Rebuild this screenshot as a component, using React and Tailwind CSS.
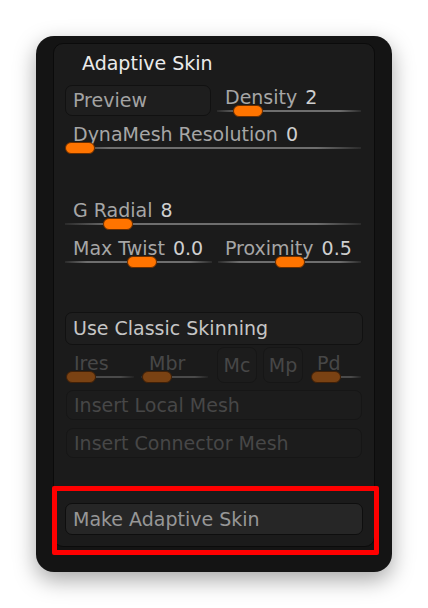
import React from "react";

function Slider({ label, value, knob, className = "", disabled = false, pl = "pl-[8px]" }) {
  return (
    <div className={`flex flex-col ${className}`}>
      <div
        className={`h-[16px] leading-[16px] whitespace-nowrap ${pl} ${
          disabled ? "text-[#474747]" : "text-[#a6a6a6]"
        }`}
      >
        {label}
        {value !== undefined && (
          <span className="text-[#cfcfcf] ml-[8px]">{value}</span>
        )}
      </div>
      <div className="relative h-[12px]">
        <div
          className={`absolute left-0 right-0 top-[5px] h-[2px] ${
            disabled
              ? "bg-[linear-gradient(to_right,#2a2a2a,#4a4a4a_30%,#4a4a4a_80%,#222222)]"
              : "bg-[linear-gradient(to_right,#2a2a2a,#6e6e6e_15%,#6e6e6e_85%,#2a2a2a)]"
          }`}
        />
        <div
          className={`absolute top-0 h-[12px] w-[30px] rounded-full border ${
            disabled
              ? "bg-[#7a4213] border-[#3f2008]"
              : "bg-[#ff7400] border-[#6a2e00]"
          }`}
          style={{ left: knob }}
        />
      </div>
    </div>
  );
}

function Button({ children, className = "", disabled = false, text = "text-[#a3a3a3]" }) {
  return (
    <div
      className={`flex items-center rounded-[7px] border pl-[7px] whitespace-nowrap ${
        disabled ? "border-[#161616] bg-[#1c1c1c] text-[#474747]" : `border-[#111111] bg-[#1e1e1e] ${text}`
      } ${className}`}
    >
      {children}
    </div>
  );
}

export default function App() {
  return (
    <div
      className="relative w-[428px] h-[608px] bg-white pt-[36px] pl-[36px]"
      style={{ fontFamily: '"DejaVu Sans", sans-serif' }}
    >
      <div className="w-[356px] h-[536px] rounded-[18px] bg-[#141414] pt-[7px] pl-[17px] shadow-[0_8px_22px_rgba(0,0,0,0.35)]">
        <div className="w-[322px] rounded-[10px] border border-[#0b0b0b] bg-[#1b1b1b] px-[11px] pb-[11px] text-[19px]">
          {/* Title */}
          <div className="h-[38px] flex items-center pl-[17px] text-[#ebebeb]">
            Adaptive Skin
          </div>

          {/* Row 1 */}
          <div className="mt-[3px] h-[32px] flex">
            <Button className="w-[146px] h-[31px]">Preview</Button>
            <Slider className="ml-[6px] mt-[4px] w-[144px]" label="Density" value="2" knob={16} />
          </div>

          {/* DynaMesh */}
          <Slider className="mt-[9px] w-[296px]" label="DynaMesh Resolution" value="0" knob={0} />

          {/* G Radial */}
          <Slider className="mt-[48px] w-[296px]" label="G Radial" value="8" knob={38} />

          {/* Max Twist / Proximity */}
          <div className="mt-[10px] flex">
            <Slider className="w-[147px]" label="Max Twist" value="0.0" knob={62} />
            <Slider className="ml-[6px] w-[143px]" label="Proximity" value="0.5" knob={57} pl="pl-[7px]" />
          </div>

          {/* Use Classic Skinning */}
          <Button className="mt-[44px] w-[298px] h-[33px]" text="text-[#c6c6c6]">
            Use Classic Skinning
          </Button>

          {/* Disabled row */}
          <div className="mt-[2px] h-[36px] flex items-end">
            <Slider className="ml-[1px] w-[68px]" label="Ires" knob={0} disabled />
            <Slider className="ml-[7px] w-[67px]" label="Mbr" knob={1} disabled />
            <div className="ml-[9px] w-[40px] h-[36px] rounded-[7px] border border-[#161616] bg-[#1c1c1c] text-[#474747] flex items-center justify-center">
              Mc
            </div>
            <div className="ml-[6px] w-[40px] h-[36px] rounded-[7px] border border-[#161616] bg-[#1c1c1c] text-[#474747] flex items-center justify-center">
              Mp
            </div>
            <Slider className="ml-[8px] w-[50px]" label="Pd" knob={0} disabled pl="pl-[6px]" />
          </div>

          {/* Insert buttons */}
          <Button className="mt-[7px] ml-[1px] w-[296px] h-[30px]" disabled>
            Insert Local Mesh
          </Button>
          <Button className="mt-[8px] ml-[1px] w-[296px] h-[30px]" disabled>
            Insert Connector Mesh
          </Button>

          {/* Make Adaptive Skin */}
          <div className="mt-[45px] w-[298px] h-[32px] rounded-[7px] border border-[#0e0e0e] bg-[#262626] text-[#979797] pl-[7px] flex items-center whitespace-nowrap">
            Make Adaptive Skin
          </div>
        </div>
      </div>

      {/* Red highlight annotation */}
      <div className="absolute left-[52px] top-[486px] w-[327px] h-[69px] border-[5px] border-[#ff0000] rounded-[2px]" />
    </div>
  );
}
